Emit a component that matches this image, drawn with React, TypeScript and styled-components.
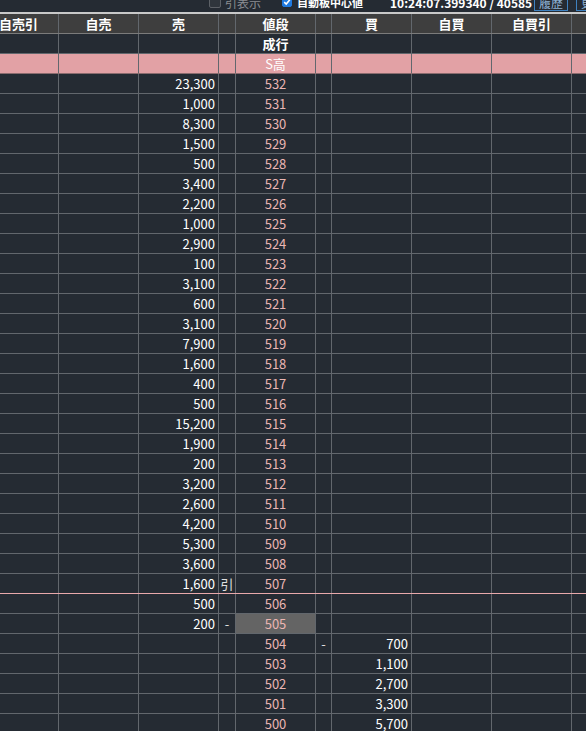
import React from 'react';
import styled, { createGlobalStyle, css } from 'styled-components';

const GlobalStyle = createGlobalStyle`
  html, body {
    margin: 0;
    padding: 0;
    background: #252b33;
    overflow: hidden;
  }
  body {
    font-family: "Noto Sans CJK JP", "Noto Sans", sans-serif;
    font-size: 13px;
    color: #f0f0f0;
  }
`;

const LINE = '#62676d';

const Page = styled.div`
  width: 586px;
  height: 731px;
  overflow: hidden;
`;

const Toolbar = styled.div`
  display: flex;
  align-items: center;
  height: 20px;
  margin-top: -8px;
  padding-left: 209px;
  white-space: nowrap;
  font-size: 12px;

  & > * {
    flex-shrink: 0;
  }
`;

const Check = styled.span<{ $on?: boolean }>`
  display: inline-flex;
  align-items: center;
  justify-content: center;
  box-sizing: border-box;
  width: ${(p) => (p.$on ? '10px' : '12px')};
  height: ${(p) => (p.$on ? '10px' : '12px')};
  border-radius: 2px;
  border: 1px solid ${(p) => (p.$on ? '#1f7ae0' : '#5d6167')};
  background: ${(p) => (p.$on ? '#1f7ae0' : '#2f353c')};
  margin-right: ${(p) => (p.$on ? '5px' : '4px')};
`;

const Label = styled.span<{ $dim?: boolean }>`
  color: ${(p) => (p.$dim ? '#8a8d91' : '#ffffff')};
  font-weight: ${(p) => (p.$dim ? 400 : 700)};
  font-size: ${(p) => (p.$dim ? '12px' : '11px')};
  margin-right: ${(p) => (p.$dim ? '21px' : '27px')};
`;

const Stamp = styled.span`
  display: inline-block;
  width: 144px;
  color: #ffffff;
  font-weight: 600;
`;

const ToolButton = styled.span`
  display: inline-flex;
  align-items: center;
  justify-content: center;
  box-sizing: border-box;
  height: 18px;
  width: 34px;
  border: 1px solid #3f82c0;
  color: #8fb3d6;
  margin-right: 8px;
`;

const Board = styled.div`
  border-top: 2px solid #c9c9c9;
  margin-left: -21px;
`;

const Row = styled.div<{ $head?: boolean; $limit?: boolean; $split?: boolean }>`
  display: grid;
  grid-template-columns: 80px 80px 80px 17px 80px 16px 80px 80px 80px 80px;
  height: 20px;
  box-sizing: border-box;
  border-bottom: 1px solid ${(p) => (p.$split ? '#e9a9ab' : LINE)};
  ${(p) =>
    p.$head &&
    css`
      background: #3e3e3e;
      border-bottom-color: #7b7b7b;
      font-weight: 700;
    `}
  ${(p) =>
    p.$limit &&
    css`
      background: #e2a1a5;
      border-bottom-color: #8a6b6e;
    `}
`;

const Cell = styled.div<{ $align?: 'left' | 'center' | 'right'; $tone?: 'qty' | 'price' | 'head'; $sel?: boolean }>`
  box-sizing: border-box;
  border-right: 1px solid ${LINE};
  line-height: 19px;
  padding: 0 3px;
  overflow: hidden;
  white-space: nowrap;
  text-align: ${(p) => p.$align || 'center'};
  color: ${(p) => (p.$tone === 'price' ? '#ecb6b3' : '#ffffff')};
  font-weight: ${(p) => (p.$tone === 'head' ? 700 : 400)};
  background: ${(p) => (p.$sel ? '#646464' : 'transparent')};
`;

const Mark = styled(Cell)`
  padding: 0;
  text-align: center;
  color: #e0e0e0;
`;

type Level = { price: number; ask?: string; bid?: string; askMark?: string; bidMark?: string };

const levels: Level[] = [
  { price: 532, ask: '23,300' },
  { price: 531, ask: '1,000' },
  { price: 530, ask: '8,300' },
  { price: 529, ask: '1,500' },
  { price: 528, ask: '500' },
  { price: 527, ask: '3,400' },
  { price: 526, ask: '2,200' },
  { price: 525, ask: '1,000' },
  { price: 524, ask: '2,900' },
  { price: 523, ask: '100' },
  { price: 522, ask: '3,100' },
  { price: 521, ask: '600' },
  { price: 520, ask: '3,100' },
  { price: 519, ask: '7,900' },
  { price: 518, ask: '1,600' },
  { price: 517, ask: '400' },
  { price: 516, ask: '500' },
  { price: 515, ask: '15,200' },
  { price: 514, ask: '1,900' },
  { price: 513, ask: '200' },
  { price: 512, ask: '3,200' },
  { price: 511, ask: '2,600' },
  { price: 510, ask: '4,200' },
  { price: 509, ask: '5,300' },
  { price: 508, ask: '3,600' },
  { price: 507, ask: '1,600', askMark: '引' },
  { price: 506, ask: '500' },
  { price: 505, ask: '200', askMark: '-' },
  { price: 504, bid: '700', bidMark: '-' },
  { price: 503, bid: '1,100' },
  { price: 502, bid: '2,700' },
  { price: 501, bid: '3,300' },
  { price: 500, bid: '5,700' },
];

const heads = ['自売引', '自売', '売', '', '値段', '', '買', '自買', '自買引', ''];

function BookRow({ level }: { level: Level }) {
  return (
    <Row $split={level.price === 507}>
      <Cell />
      <Cell />
      <Cell $align="right" $tone="qty">{level.ask}</Cell>
      <Mark>{level.askMark}</Mark>
      <Cell $tone="price" $sel={level.price === 505}>{level.price}</Cell>
      <Mark>{level.bidMark}</Mark>
      <Cell $align="right" $tone="qty">{level.bid}</Cell>
      <Cell />
      <Cell />
      <Cell />
    </Row>
  );
}

export default function App() {
  return (
    <Page>
      <GlobalStyle />
      <Toolbar>
        <Check />
        <Label $dim>引表示</Label>
        <Check $on>
          <svg width="8" height="8" viewBox="0 0 8 8">
            <path d="M1.2 4.2 L3.2 6 L6.8 1.8" fill="none" stroke="#fff" strokeWidth="1.6" />
          </svg>
        </Check>
        <Label>自動板中心値</Label>
        <Stamp>10:24:07.399340 / 40585</Stamp>
        <ToolButton>履歴</ToolButton>
        <ToolButton>更新</ToolButton>
      </Toolbar>
      <Board>
        <Row $head>
          {heads.map((h, i) => (
            <Cell key={i} $tone="head">{h}</Cell>
          ))}
        </Row>
        <Row>
          <Cell />
          <Cell />
          <Cell />
          <Mark />
          <Cell $tone="head">成行</Cell>
          <Mark />
          <Cell />
          <Cell />
          <Cell />
          <Cell />
        </Row>
        <Row $limit>
          <Cell />
          <Cell />
          <Cell />
          <Mark />
          <Cell>S高</Cell>
          <Mark />
          <Cell />
          <Cell />
          <Cell />
          <Cell />
        </Row>
        {levels.map((l) => (
          <BookRow key={l.price} level={l} />
        ))}
      </Board>
    </Page>
  );
}
